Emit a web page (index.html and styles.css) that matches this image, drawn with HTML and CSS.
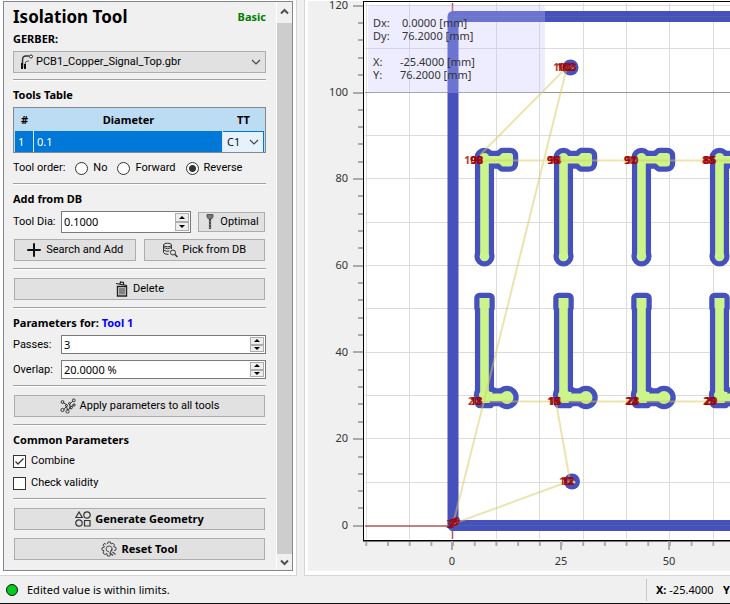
FILE: index.html
```html
<!DOCTYPE html>
<html lang="en">
<head>
<meta charset="utf-8">
<title>Isolation Tool</title>
<link rel="stylesheet" href="styles.css">
</head>
<body>
<main class="workspace">
  <aside class="dock">
    <div class="panel">
      <form class="content">
        <section class="group first">
          <header class="title-row"><h1>Isolation Tool</h1><span class="level">Basic</span></header>
          <label class="strong" for="gerber">GERBER:</label>
          <div class="combo">
            <svg class="combo-icon" width="14" height="16" viewBox="0 0 14 16"><path d="M2.5 14V6Q2.500 2 6 2H9" fill="none" stroke="#333" stroke-width="1.500"/><path d="M2 9V15M5 10V15" stroke="#111" stroke-width="2"/><path d="M5 10Q5 7 8 7H9" fill="none" stroke="#555"/><circle cx="11" cy="2.500" r="1.500" fill="#fff" stroke="#222"/></svg>
            <select id="gerber"><option>PCB1_Copper_Signal_Top.gbr</option></select>
            <svg class="chevron" width="10" height="6" viewBox="0 0 10 6"><path d="M1 1L5 5L9 1"/></svg>
          </div>
        </section>
        <section class="group">
          <h2>Tools Table</h2>
          <table class="tools">
            <thead><tr><th class="num">#</th><th>Diameter</th><th class="type">TT</th></tr></thead>
            <tbody><tr><td>1</td><td>0.1</td><td class="type-cell"><div class="type-box"><select aria-label="Tool type"><option>C1</option></select><svg class="chevron" width="10" height="6" viewBox="0 0 10 6"><path d="M1 1L5 5L9 1"/></svg></div></td></tr></tbody>
          </table>
          <div class="order">
            <span>Tool order:</span>
            <label><input type="radio" name="order">No</label>
            <label><input type="radio" name="order">Forward</label>
            <label><input type="radio" name="order" checked>Reverse</label>
          </div>
        </section>
        <section class="group roomy">
          <h2>Add from DB</h2>
          <div class="field tall">
            <label for="dia">Tool Dia:</label>
            <div class="spin"><input id="dia" type="text" value="0.1000"><span class="steps"><button type="button" aria-label="Increase"><i class="up"></i></button><button type="button" aria-label="Decrease"><i class="down"></i></button></span></div>
            <button class="btn optimal" type="button"><svg width="12" height="18" viewBox="0 0 12 18"><path d="M3 1.500H9V4L7.500 6H4.500L3 4Z" fill="#777" stroke="#555"/><path d="M6 6V16" stroke="#444" stroke-width="2"/><path d="M4.500 9L7.500 8M4.500 12L7.500 11M4.500 15L7.500 14" stroke="#888"/></svg>Optimal</button>
          </div>
          <div class="pair">
            <button class="btn" type="button"><svg width="16" height="16" viewBox="0 0 16 16"><path d="M8 2V14M2 8H14" stroke="#111" stroke-width="2" stroke-linecap="round"/></svg>Search and Add</button>
            <button class="btn" type="button"><svg width="16" height="16" viewBox="0 0 16 16" fill="none" stroke="#333"><ellipse cx="5.500" cy="3" rx="4" ry="1.800"/><path d="M1.500 3V10.500Q2 12.500 6.500 12.300M9.500 3V7M1.500 5.500Q5.500 8 9.500 5.500M1.500 8Q4.500 10 7.500 9"/><circle cx="11" cy="10.500" r="2.500"/><path d="M13 12.500L15.500 15" stroke-width="1.500"/></svg>Pick from DB</button>
          </div>
        </section>
        <section class="group roomy buttons">
          <button class="btn" type="button"><svg width="14" height="16" viewBox="0 0 14 16" fill="none" stroke="#222"><path d="M1 2.500L12 4.500M5 3L5.500 1L8.500 1.500L8.500 3.500" stroke-width="1.200"/><path d="M2.500 5.500H11.500V15H2.500Z" stroke-width="1.400"/><path d="M5 7V13.500M7 7V13.500M9 7V13.500"/></svg>Delete</button>
        </section>
        <section class="group">
          <h2>Parameters for: <span class="tool-name">Tool 1</span></h2>
          <div class="rows">
            <div class="field"><label for="passes">Passes:</label><div class="spin"><input id="passes" type="text" value="3"><span class="steps"><button type="button" aria-label="Increase"><i class="up"></i></button><button type="button" aria-label="Decrease"><i class="down"></i></button></span></div></div>
            <div class="field"><label for="overlap">Overlap:</label><div class="spin"><input id="overlap" type="text" value="20.0000 %"><span class="steps"><button type="button" aria-label="Increase"><i class="up"></i></button><button type="button" aria-label="Decrease"><i class="down"></i></button></span></div></div>
          </div>
        </section>
        <section class="group roomy buttons">
          <button class="btn" type="button"><svg width="16" height="16" viewBox="0 0 16 16" fill="none" stroke="#333"><path d="M3 4.500L7 7M4 11.500L6.500 8L7.500 12L10.500 10L9.500 6L13 3M11.500 9L13.500 7"/><circle cx="2.500" cy="4" r="1.400"/><circle cx="13.800" cy="2.300" r="1.400"/><circle cx="2.500" cy="12" r="1.600"/><circle cx="7.500" cy="13.500" r="1.600"/><circle cx="11" cy="9.500" r="1.400"/><circle cx="14" cy="7" r="1.200"/><circle cx="6.500" cy="7.500" r="1"/><circle cx="9.500" cy="5.500" r="1"/></svg>Apply parameters to all tools</button>
        </section>
        <section class="group">
          <h2>Common Parameters</h2>
          <div class="checks">
            <label><input type="checkbox" checked>Combine</label>
            <label><input type="checkbox">Check validity</label>
          </div>
        </section>
        <section class="group roomy buttons">
          <button class="btn bold" type="button"><svg width="16" height="16" viewBox="0 0 16 16" fill="none" stroke="#333" stroke-width="1.200"><path d="M4 1L7.200 6.500H.8Z"/><circle cx="12" cy="4" r="3.200"/><circle cx="4" cy="12" r="3.200"/><path d="M9.500 9.500H15V15H9.500Z"/></svg>Generate Geometry</button>
          <button class="btn bold" type="button"><svg width="16" height="16" viewBox="0 0 16 16" fill="none" stroke="#444"><path d="M6.500 3L7 1H9.500L10 3L12 2.200L13.500 4L12.700 5.800L15 6.500V9L13 9.500M3.800 5.500L2 4.500L3.200 2.500L5.200 3.200M3.500 6L1 6.800V9L3 9.800L2 12L4 13.500L5.800 12.500L6.500 15H9L9.500 12.800"/><path d="M11 9.500Q12 6 9 5Q5.500 4.500 5 7.500Q5 10.500 8 11"/><path d="M11 8L9 12L12 14.500M11.500 11L14.500 13.500" stroke-width="1.200"/></svg>Reset Tool</button>
        </section>
      </form>
      <div class="scroll" aria-hidden="true">
        <svg class="arrow" width="15" height="21" viewBox="0 0 15 21"><path d="M4 11.500L7.500 8L11 11.500"/></svg>
        <div class="thumb"></div>
        <svg class="arrow" width="15" height="16" viewBox="0 0 15 16"><path d="M4 6.500L7.500 10L11 6.500"/></svg>
      </div>
    </div>
  </aside>
  <section class="view">
    <svg class="plot" role="img" aria-label="Board plot">
      <defs>
        <clipPath id="area"><rect x="365" y="3" width="3000" height="536"/></clipPath>
        <pattern id="xminor" x="365.300" y="541" width="21.690" height="5" patternUnits="userSpaceOnUse"><path d="M1 0V5" stroke="#aaa" stroke-width="2"/></pattern>
        <g id="padT">
          <path d="M-4.300 0H4.300V97H-4.300Z M0 -3.500H22V4H0Z M18 -6.500H25.500Q28.500 -6.500 28.500 -3.500V3.500Q28.500 7 25.500 7H18L14 3.500V-3Z"/>
          <circle cy="-1.500" r="5"/><circle cy="97" r="4.800"/>
        </g>
        <g id="padL">
          <path d="M-5 0H5V10H-5Z M-4.300 8H4.300V98H-4.300Z M-4.500 94H8L5 105H-4.500Z M0 95.500H22V103H0Z"/>
          <circle cx="-1" cy="97" r="4.500"/><circle cx="3" cy="97" r="4"/><circle cx="22.500" cy="99.500" r="6.500"/>
        </g>
        <g id="columns">
          <use href="#padT" x="484.500" y="159.500"/><use href="#padT" x="563.500" y="159.500"/><use href="#padT" x="641.500" y="159.500"/><use href="#padT" x="719.500" y="159.500"/>
          <use href="#padL" x="484.500" y="298"/><use href="#padL" x="563.500" y="298"/><use href="#padL" x="641.500" y="298"/><use href="#padL" x="719.500" y="298"/>
        </g>
      </defs>
      <g transform="translate(-308 -1)">
        <rect x="363" y="1" width="3000" height="541" fill="#777"/>
        <rect x="363" y="1" width="3000" height="540" fill="#000"/>
        <rect x="364" y="2" width="3000" height="538" fill="#fff"/>
        <g clip-path="url(#area)">
          <path class="grid" d="M366.500 0V540M409.500 0V540M496.500 0V540M539.500 0V540M583.500 0V540M626.500 0V540M669.500 0V540M713.500 0V540M365 5.500H3000M365 48.500H3000M365 135.500H3000M365 178.500H3000M365 222.500H3000M365 265.500H3000M365 308.500H3000M365 352.500H3000M365 395.500H3000M365 438.500H3000M365 482.500H3000"/>
          <path d="M365 92.500H3000" stroke="#999"/>
          <path d="M365 526H452M452.500 3V12M452.500 530V540" stroke="#b85454" stroke-width="1.500"/>
          <path class="board" d="M3000 16.500H453V525.500H3000"/>
          <path d="M452 16.500H3000M452 525.500H3000" stroke="#47669d"/>
          <use href="#columns" class="halo"/>
          <use href="#columns" class="copper"/>
          <circle cx="570.500" cy="67.500" r="8" fill="#4651be"/><circle cx="572" cy="481.500" r="8" fill="#4651be"/>
          <path d="M568 66l3 3 3-3M569 483l3-3 3 3" fill="none" stroke="#c5e86a" stroke-width="2"/>
          <path class="travel" d="M480 155L567 67L484 401L453 524L570 481L556 402M484 160.500H3000M474 401.500H3000"/>
          <g class="marks">
            <text x="464" y="164">100</text><text x="470" y="164">99</text><text x="471" y="164">98</text>
            <text x="547" y="164">96</text><text x="549" y="164">94</text><text x="547" y="164">95</text>
            <text x="624" y="164">92</text><text x="626" y="164">90</text><text x="624" y="164">91</text>
            <text x="702" y="164">88</text><text x="704" y="164">86</text><text x="703" y="164">85</text>
            <text x="468" y="405">20</text><text x="470" y="405">18</text><text x="470" y="405">13</text>
            <text x="547" y="405">16</text><text x="548" y="405">15</text><text x="549" y="405">14</text>
            <text x="625" y="405">22</text><text x="627" y="405">23</text><text x="626" y="405">24</text>
            <text x="703" y="405">25</text><text x="705" y="405">29</text><text x="704" y="405">20</text>
            <text x="553" y="71">103</text><text x="556" y="71">102</text><text x="558" y="71">103</text>
            <text x="559" y="485">10</text><text x="561" y="485">12</text><text x="562" y="485">12</text>
            <text x="446" y="528">3</text><text x="448" y="528">2</text><text x="450" y="527">7</text><text x="452" y="526">8</text><text x="454" y="525">9</text>
          </g>
        </g>
        <rect x="368" y="5" width="177" height="88" rx="4" fill="#c8c4ff" fill-opacity=".3"/>
        <g class="readout">
          <text x="373" y="27">Dx:</text><text x="402" y="27">0.0000 [mm]</text>
          <text x="373" y="40">Dy:</text><text x="402" y="40">76.2000 [mm]</text>
          <text x="373" y="66">X:</text><text x="400" y="66">-25.4000 [mm]</text>
          <text x="373" y="79">Y:</text><text x="400" y="79">76.2000 [mm]</text>
        </g>
        <path class="major" d="M353 6H363M353 93H363M353 179H363M353 266H363M353 352H363M353 439H363M353 526H363M452 541V550M561 541V550M669 541V550"/>
        <path class="minor" d="M358 23H363M358 40H363M358 58H363M358 75H363M358 110H363M358 127H363M358 144H363M358 162H363M358 196H363M358 214H363M358 231H363M358 248H363M358 283H363M358 300H363M358 318H363M358 335H363M358 370H363M358 387H363M358 404H363M358 422H363M358 457H363M358 474H363M358 491H363M358 508H363"/>
        <rect x="365" y="542" width="3000" height="4" fill="url(#xminor)"/>
        <g class="ylabels"><text x="348" y="9">120</text><text x="348" y="96">100</text><text x="348" y="182">80</text><text x="348" y="269">60</text><text x="348" y="356">40</text><text x="348" y="442">20</text><text x="348" y="529">0</text></g>
        <g class="xlabels"><text x="452" y="565">0</text><text x="561" y="565">25</text><text x="669" y="565">50</text></g>
      </g>
    </svg>
  </section>
</main>
<footer class="status">
  <span class="lamp"></span><span class="message">Edited value is within limits.</span>
  <div class="coords"><span><b>X:</b> -25.4000</span><b>Y</b></div>
</footer>
</body>
</html>
```
FILE: styles.css
```css
* { box-sizing: border-box; }
html, body { height: 100%; }
body {
  margin: 0;
  display: flex;
  flex-direction: column;
  overflow: hidden;
  background: #f0f0f0;
  color: #000;
  font: 11px/16px "Noto Sans", "Open Sans", sans-serif;
  border-bottom: 1px solid #111;
}
button, input, select { font: inherit; color: inherit; margin: 0; }
svg { display: block; flex: none; }
h1, h2 { margin: 0; }

.workspace { flex: 1; min-height: 0; display: flex; gap: 7px; }
.dock {
  width: 297px;
  flex: none;
  padding: 1px 3px 4px;
  background: #fff;
  border-right: 1px solid #d5d5d5;
  border-bottom: 1px solid #d5d5d5;
}
.panel {
  height: 100%;
  display: flex;
  border: 1px solid #828790;
  background: #f0f0f0;
}
.content { flex: 1; min-width: 0; padding: 2px 10px 0 9px; }
.group {
  padding: 7px 0 6px;
  border-top: 1px solid #a0a0a0;
  box-shadow: inset 0 1px #fff;
}
.group.first { border: 0; padding-top: 0; box-shadow: none; }
.roomy { padding-bottom: 7px; }
.title-row { display: flex; justify-content: space-between; align-items: center; height: 26px; }
.title-row h1 { font-size: 17px; line-height: 26px; }
.level { color: #008000; font-weight: bold; }
.strong { display: block; font-weight: bold; line-height: 18px; margin-bottom: 3px; }
h2 { font-size: 11px; line-height: 16px; margin-bottom: 4px; }
.tool-name { color: #00f; }

.combo select, .btn, .order, .checks, .field > label { font-family: Roboto, "Noto Sans", sans-serif; }

.combo {
  display: flex;
  align-items: center;
  height: 22px;
  padding: 0 4px 0 6px;
  background: #e1e1e1;
  border: 1px solid #adadad;
}
select { appearance: none; flex: 1; min-width: 0; border: 0; padding: 0; background: transparent; }
.combo select { padding-left: 2px; }
.chevron path { fill: none; stroke: #444; stroke-width: 1.2; }

.tools {
  width: 100%;
  height: 46px;
  table-layout: fixed;
  border-collapse: separate;
  border-spacing: 0;
  border: 1px solid #828790;
  padding: 0 1px;
  background: #bcdcf4;
}
.tools th { height: 23px; padding: 0; line-height: 16px; }
.tools td { height: 21px; padding: 0 3px; background: #0078d7; color: #fff; line-height: 16px; border-right: 1px solid #d8e6f2; }
.tools .num { width: 19px; }
.tools .type { width: 41px; }
.tools .type-cell { padding: 1px 1px 0 0; color: #111; border: 0; }
.type-box { display: flex; align-items: center; height: 20px; padding: 0 4px; background: #e5f1fb; }

.order { display: flex; align-items: center; gap: 10px; height: 18px; margin-top: 6px; }
.order label, .checks label { display: flex; align-items: center; gap: 5px; }
input[type="radio"], input[type="checkbox"] {
  appearance: none;
  width: 13px;
  height: 13px;
  flex: none;
  background: #fff;
  border: 1px solid #333;
}
input[type="radio"] { border-radius: 50%; }
input[type="radio"]:checked { background: radial-gradient(circle, #333 3px, #fff 4px); }
input[type="checkbox"]:checked {
  background: #fff url("data:image/svg+xml,%3Csvg xmlns='http://www.w3.org/2000/svg' viewBox='0 0 11 11'%3E%3Cpath d='M1.500 5.500L4 8L9.500 2.500' fill='none' stroke='%23333' stroke-width='1.300'/%3E%3C/svg%3E");
}

.field { display: flex; align-items: center; height: 19px; }
.field > label { width: 48px; flex: none; }
.tall { height: 22px; }
.spin { display: flex; flex: 1; min-width: 0; height: 100%; padding: 1px; background: #fff; border: 1px solid #7a7a7a; }
.spin input { flex: 1; min-width: 0; border: 0; padding: 0 1px; background: transparent; outline: 0; }
.steps { display: flex; flex-direction: column; width: 14px; }
.steps button { flex: 1; min-height: 0; padding: 0; display: grid; place-items: center; background: #eee; border: 1px solid #adadad; }
.steps i { border: solid transparent; border-width: 0 3px; }
.steps .up { border-bottom: 3px solid #000; }
.steps .down { border-top: 3px solid #000; }

.btn {
  display: flex;
  align-items: center;
  justify-content: center;
  gap: 4px;
  height: 22px;
  padding: 0 4px;
  background: #e1e1e1;
  border: 1px solid #adadad;
  border-radius: 0;
  white-space: nowrap;
}
.optimal { width: 67px; height: 20px; margin: 0 1px 0 7px; }
.btn.bold { font-family: "Noto Sans", "Open Sans", sans-serif; font-weight: bold; }
.pair { display: grid; grid-template-columns: 1fr 1fr; gap: 8px; margin: 6px 1px 0; }
.buttons { display: grid; gap: 8px; padding: 9px 1px 7px; }
.rows { display: grid; gap: 6px; }
.checks { display: grid; gap: 4px; }
.checks label { height: 18px; }

.scroll { display: flex; flex-direction: column; width: 16px; border-left: 1px solid #fff; }
.thumb { flex: 1; background: #cdcdcd; }
.arrow path { fill: none; stroke: #505050; stroke-width: 2; }

.view {
  flex: 1;
  min-width: 0;
  padding: 1px 0 4px 3px;
  background: #fff;
  border-left: 1px solid #d5d5d5;
  border-bottom: 1px solid #d5d5d5;
}
.plot { width: 100%; height: 100%; background: #f0f0f0; font: 11px "Noto Sans", sans-serif; }
.grid { stroke: #dcdcdc; }
.board { fill: none; stroke: #4651be; stroke-width: 11; stroke-linejoin: round; }
.halo { fill: #4651be; stroke: #4651be; stroke-width: 10.5; stroke-linejoin: round; }
.copper { fill: #cbf58a; }
.travel { fill: none; stroke: #d8cc5c; stroke-opacity: .5; stroke-width: 2; }
.marks { fill: #a00000; fill-opacity: .8; font-weight: bold; }
.readout { fill: #333; }
.major { stroke: #aaa; stroke-width: 2; }
.minor { stroke: #aaa; stroke-width: 2; }
.ylabels { text-anchor: end; fill: #333; }
.xlabels { text-anchor: middle; fill: #333; }

.status { display: flex; align-items: center; height: 27px; padding-left: 6px; overflow: hidden; }
.lamp { width: 12px; height: 12px; border: 1px solid #111; border-radius: 50%; background: #00cc1b; }
.message { margin-left: 9px; font-size: 11px; }
.coords { display: flex; justify-content: space-between; margin-left: auto; width: 84px; padding-left: 9px; border-left: 1px solid #c8c8c8; height: 22px; line-height: 22px; font-size: 11px; white-space: nowrap; }
```
